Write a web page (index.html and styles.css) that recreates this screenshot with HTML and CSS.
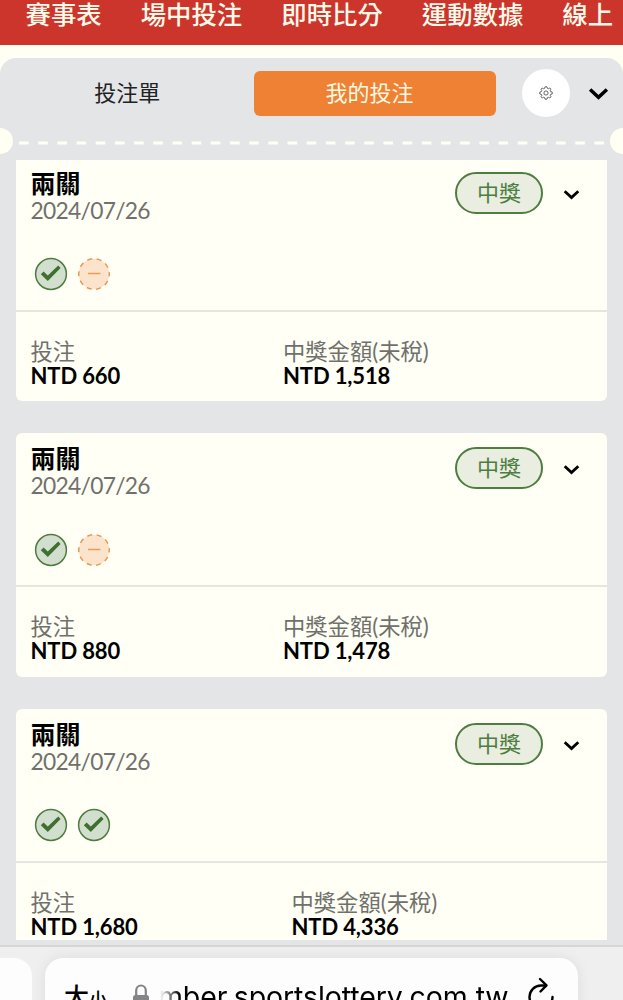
FILE: index.html
```html
<!DOCTYPE html>
<html lang="zh-Hant">
<head>
<meta charset="utf-8">
<title>我的投注</title>
<link rel="stylesheet" href="styles.css">
</head>
<body>
<svg class="defs" width="0" height="0">
  <symbol id="chevron" viewBox="0 0 20 12"><path d="M2 2.2 10 9.6 18 2.2" fill="none" stroke="#000" stroke-width="3.3"/></symbol>
  <symbol id="won" viewBox="0 0 34 34">
    <circle cx="17" cy="17" r="15.4" fill="#d3dfce" stroke="#4c7c3e" stroke-width="1.5"/>
    <path d="M6.8 17.2 9.6 14.5 13.8 18.6 24.2 8.5 26.6 11 13.8 24.1Z" fill="#3f6f31"/>
  </symbol>
  <symbol id="pending" viewBox="0 0 34 34">
    <circle cx="17" cy="17" r="15.3" fill="#fbe4cb" stroke="#e79a55" stroke-width="1.5" stroke-dasharray="5 4.61" stroke-dashoffset="2.5"/>
    <path d="M11 16.5H23.4" stroke="#ec9c51" stroke-width="1.5"/>
  </symbol>
</svg>
<nav class="nav">
  <span>賽事表</span><span>場中投注</span><span>即時比分</span><span>運動數據</span><span>線上</span>
</nav>
<main class="panel">
  <header class="tabs">
    <div class="tab">投注單</div>
    <div class="tab tab-active">我的投注</div>
    <div class="settings">
      <svg width="14" height="14" viewBox="0 0 14 14" fill="none" stroke="#555" stroke-width=".9" stroke-linejoin="round">
        <path d="M6 .8H8L8.4 2.4 9.3 2.8 10.8 2 12 3.2 11.2 4.7 11.6 5.6 13.2 6V8L11.6 8.4 11.2 9.3 12 10.8 10.8 12 9.3 11.2 8.4 11.6 8 13.2H6L5.6 11.6 4.7 11.2 3.2 12 2 10.8 2.8 9.3 2.4 8.4.8 8V6L2.4 5.6 2.8 4.7 2 3.2 3.2 2 4.7 2.8 5.6 2.4Z"/>
        <circle cx="7" cy="7" r="2.1"/>
      </svg>
    </div>
    <svg class="tabs-chevron"><use href="#chevron"/></svg>
  </header>
  <div class="tear">
    <i class="notch notch-left"></i>
    <svg class="dashes" width="586" height="4"><path d="M0 2H586" stroke="#fffff6" stroke-width="3.2" stroke-dasharray="9.6 9.58"/></svg>
    <i class="notch notch-right"></i>
  </div>
  <section class="list">
    <article class="card">
      <div class="card-top">
        <div class="heading"><h2>兩關</h2><time>2024/07/26</time></div>
        <span class="badge">中獎</span>
        <svg class="chevron"><use href="#chevron"/></svg>
      </div>
      <div class="legs"><svg><use href="#won"/></svg><svg><use href="#pending"/></svg></div>
      <div class="amounts">
        <div><p>投注</p><strong>NTD 660</strong></div>
        <div><p>中獎金額(未稅)</p><strong>NTD 1,518</strong></div>
      </div>
    </article>
    <article class="card">
      <div class="card-top">
        <div class="heading"><h2>兩關</h2><time>2024/07/26</time></div>
        <span class="badge">中獎</span>
        <svg class="chevron"><use href="#chevron"/></svg>
      </div>
      <div class="legs"><svg><use href="#won"/></svg><svg><use href="#pending"/></svg></div>
      <div class="amounts">
        <div><p>投注</p><strong>NTD 880</strong></div>
        <div><p>中獎金額(未稅)</p><strong>NTD 1,478</strong></div>
      </div>
    </article>
    <article class="card">
      <div class="card-top">
        <div class="heading"><h2>兩關</h2><time>2024/07/26</time></div>
        <span class="badge">中獎</span>
        <svg class="chevron"><use href="#chevron"/></svg>
      </div>
      <div class="legs"><svg><use href="#won"/></svg><svg><use href="#won"/></svg></div>
      <div class="amounts amounts-wide">
        <div><p>投注</p><strong>NTD 1,680</strong></div>
        <div><p>中獎金額(未稅)</p><strong>NTD 4,336</strong></div>
      </div>
    </article>
  </section>
</main>
<footer class="browser-bar">
  <div class="prev-page"></div>
  <div class="address">
    <span class="text-size"><b>大</b><small>小</small></span>
    <svg class="lock" width="18" height="26" viewBox="0 0 18 26"><path d="M4.2 12V6.5a4.8 5 0 0 1 9.6 0V12" fill="none" stroke="#858589" stroke-width="2.2"/><rect x="1" y="11" width="16" height="13" rx="2.5" fill="#858589"/></svg>
    <span class="url">mber.sportslottery.com.tw</span>
    <svg class="reload" width="32" height="36" viewBox="0 0 32 36" fill="none" stroke="#000" stroke-width="2.4" stroke-linecap="round" stroke-linejoin="round"><path d="M20 8.5H15A11.5 11.5 0 1 0 26.5 20"/><path d="M14 2 20.5 8.3 14.5 14.5"/></svg>
  </div>
</footer>
</body>
</html>
```
FILE: styles.css
```css
* { box-sizing: border-box; }
body {
  margin: 0;
  width: 623px;
  height: 1000px;
  overflow: hidden;
  display: flex;
  flex-direction: column;
  background: #fffff3;
  font-family: Lato, "Noto Sans CJK TC", sans-serif;
}
.defs { position: absolute; }
svg { display: block; flex: none; }
.nav {
  flex: none;
  height: 45px;
  padding-left: 25.5px;
  display: flex;
  gap: 39px;
  background: #cb352b;
  color: #fff9e9;
  font-size: 25.4px;
  font-weight: 500;
  line-height: 28px;
  white-space: nowrap;
  overflow: hidden;
}
.panel {
  flex: none;
  height: 887px;
  margin-top: 13px;
  border-radius: 16px 16px 0 0;
  background: #e4e5e7;
}
.tabs {
  height: 70px;
  display: flex;
  align-items: center;
}
.tab {
  width: 254.4px;
  height: 45px;
  text-align: center;
  font-size: 22px;
  line-height: 44px;
  color: #222;
}
.tab-active {
  width: 242px;
  padding-right: 12px;
  border-radius: 6px;
  background: #ee8133;
  color: #fff8e2;
}
.settings {
  width: 48px;
  height: 48px;
  margin-left: 25.6px;
  border-radius: 50%;
  background: #fff;
  display: grid;
  place-items: center;
}
.tabs-chevron { width: 21px; height: 13px; margin-left: 18px; }
.tear {
  height: 26px;
  display: flex;
  align-items: center;
}
.notch { flex: none; width: 13px; height: 26px; background: #fffff3; }
.notch-left { border-radius: 0 13px 13px 0; }
.notch-right { border-radius: 13px 0 0 13px; margin-left: auto; }
.dashes { margin: 3px 0 0 6px; }
.list {
  height: 780px;
  margin: 6px 16px 0;
  overflow: hidden;
}
.card {
  height: 243.5px;
  margin-bottom: 32px;
  border-radius: 6px;
  background: #fffff5;
}
.card:first-child { margin-top: -2.5px; border-radius: 0 0 6px 6px; }
.card-top {
  display: flex;
  height: 97px;
  padding: 14px 27px 0 14.5px;
}
.heading { flex: 1; margin-top: -2px; }
h2 { margin: 0; font-size: 25px; line-height: 27px; font-weight: 700; color: #000; }
time { display: block; font-size: 22.8px; line-height: 27px; letter-spacing: -.7px; color: #70716c; }
.badge {
  width: 88px;
  height: 42px;
  border: 2px solid #4e7d40;
  border-radius: 21px;
  background: #e9eee0;
  color: #4e7d40;
  text-align: center;
  font-size: 22px;
  line-height: 37px;
}
.chevron { width: 17px; height: 11px; margin: 17px 0 0 20px; }
.legs {
  height: 55px;
  padding: 2.5px 0 0 18.2px;
  display: flex;
  gap: 8.5px;
}
.legs svg { width: 34px; height: 34px; }
.amounts {
  display: grid;
  grid-template-columns: 252.5px 1fr;
  padding: 28px 0 0 14.5px;
  border-top: 2px solid #e5e6e0;
}
.amounts-wide { grid-template-columns: 261px 1fr; }
.amounts p { margin: 0; font-size: 22.3px; line-height: 24px; color: #70716c; }
.amounts strong { display: block; font-size: 22px; line-height: 24px; letter-spacing: -.13px; color: #000; }
.browser-bar {
  flex: none;
  height: 55px;
  border-top: 2px solid #d5d6d8;
  background: #efeff0;
  display: flex;
  gap: 13px;
  padding-top: 11px;
  overflow: hidden;
}
.prev-page { width: 32px; height: 70px; background: #fdfdfe; border-radius: 0 18px 0 0; }
.address {
  width: 533px;
  height: 72px;
  border-radius: 18px;
  background: #fdfdfe;
  box-shadow: 0 0 14px rgba(0,0,0,.08);
  display: flex;
  padding: 20px 0 0 19px;
  color: #000;
}
.text-size { width: 68px; line-height: 36px; white-space: nowrap; }
.text-size b { font-size: 25px; font-weight: 500; }
.text-size small { font-size: 18px; font-weight: 500; }
.lock { margin-top: 6px; }
.url {
  width: 352px;
  margin-left: 8px;
  font-family: Inter, sans-serif;
  font-size: 28.5px;
  letter-spacing: -.1px;
  line-height: 38px;
  white-space: nowrap;
  -webkit-mask-image: linear-gradient(90deg, transparent 2px, #000 22px);
  mask-image: linear-gradient(90deg, transparent 2px, #000 22px);
}
.reload { margin: -1px 0 0 16px; }
```
